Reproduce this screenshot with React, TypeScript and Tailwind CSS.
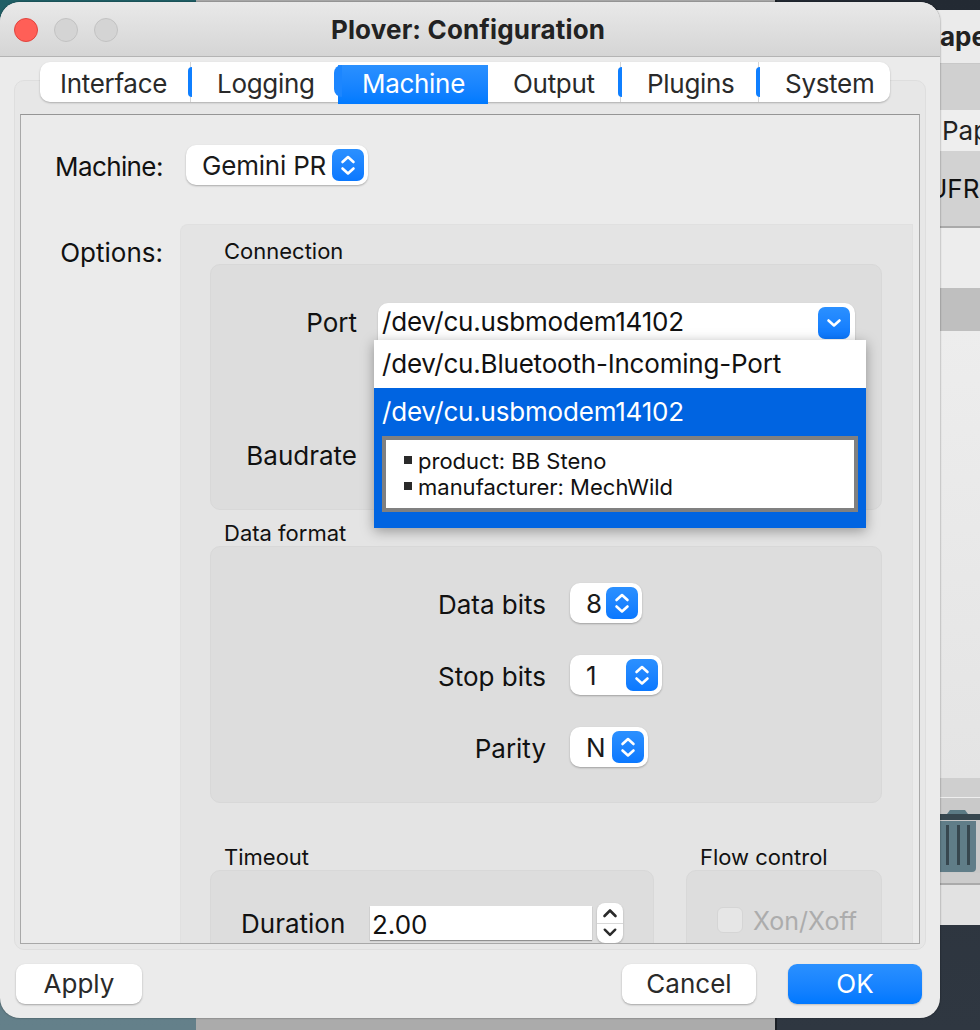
import React from "react";

const Stepper = ({ kind = "both" }: { kind?: "both" | "down" }) => (
  <span className="flex h-[32px] w-[32px] shrink-0 items-center justify-center rounded-[7px] bg-gradient-to-b from-[#2b90ff] to-[#0a78ff]">
    <svg width="32" height="32" viewBox="0 0 32 32" fill="none" stroke="#fff" strokeWidth="2.6" strokeLinecap="round" strokeLinejoin="round">
      {kind === "both" ? (
        <>
          <path d="M10.5 13 16 8l5.500 5" />
          <path d="M10.500 19.500 16 24.500l5.500-5" />
        </>
      ) : (
        <path d="M10.500 13.500 16 18.500l5.500-5" />
      )}
    </svg>
  </span>
);

const Combo = ({ text, width, pad }: { text: string; width: string; pad: string }) => (
  <div className={`flex h-[40px] items-center justify-between rounded-[10px] bg-white pr-[4px] shadow-[0_1px_2px_rgba(0,0,0,0.28)] ${width}`}>
    <span className={`text-[#1a1a1a] ${pad}`}>{text}</span>
    <Stepper />
  </div>
);

const Crescent = ({ cls }: { cls: string }) => (
  <span className={`absolute top-[5px] h-[30px] w-[4px] rounded-l-full bg-[#0f7fff] ${cls}`} />
);

const Tabs = () => (
  <div className="relative z-10 ml-[40px] mt-[5px] flex h-[40px] w-[850px] rounded-[10px] bg-white tracking-[-0.3px] text-[#2a2a2a] shadow-[0_1px_2px_rgba(0,0,0,0.25)]">
    <div className="relative flex w-[150px] items-center pl-[20px] pt-[3px]">Interface</div>
    <div className="relative flex w-[148px] items-center border-l border-[#d5d5d5] pl-[26px] pt-[3px]">
      Logging
      <Crescent cls="left-[-3px]" />
    </div>
    <div className="relative flex h-[39px] w-[150px] translate-y-[3px] items-center bg-gradient-to-b from-[#2a90ff] to-[#007aff] pl-[24px] text-white">
      <span className="-translate-y-[1px]">Machine</span>
      <span className="absolute left-[-4px] top-0 h-[32px] w-[8px] rounded-l-[8px] bg-[#1c86ff]" />
    </div>
    <div className="relative flex w-[132px] items-center pl-[25px] pt-[3px]">Output</div>
    <div className="relative flex w-[138px] items-center border-l border-[#d5d5d5] pl-[26px] pt-[3px]">
      Plugins
      <Crescent cls="left-[-3px]" />
    </div>
    <div className="relative flex w-[132px] items-center border-l border-[#d5d5d5] pl-[26px] pt-[3px]">
      System
      <Crescent cls="left-[-3px]" />
    </div>
  </div>
);

const PortDropdown = () => (
  <div className="absolute left-[163px] top-[75px] z-20 h-[188px] w-[492px] bg-[#0064e1] tracking-[-0.2px] shadow-[0_3px_12px_rgba(0,0,0,0.35)]">
    <div className="flex h-[48px] items-center bg-white pb-[2px] pl-[8px] text-[#111]">/dev/cu.Bluetooth-Incoming-Port</div>
    <div className="flex h-[48px] items-center pb-[2px] pl-[8px] text-white">/dev/cu.usbmodem14102</div>
    <div className="mx-[8px] h-[76px] border-[4px] border-[#808080] bg-white pl-[18px] pt-[8px] text-[22px] leading-[26px] tracking-normal text-[#111]">
      <div className="flex items-center gap-[6px]">
        <span className="h-[8px] w-[8px] -translate-y-[1px] bg-[#2a2a2a]" />
        product: BB Steno
      </div>
      <div className="flex items-center gap-[6px]">
        <span className="h-[8px] w-[8px] -translate-y-[1px] bg-[#2a2a2a]" />
        manufacturer: MechWild
      </div>
    </div>
  </div>
);

const Connection = () => (
  <div className="relative h-[246px] w-[672px] rounded-[10px] border border-[#d8d8d8] bg-[#dddddd] pt-[38px]">
    <div className="flex h-[37px] items-center">
      <span className="w-[146px] translate-y-[1px] text-right text-[#111]">Port</span>
      <div className="ml-[21px] flex h-[37px] w-[477px] items-start justify-between rounded-t-[10px] bg-white pl-[4px] pr-[5px] pt-[4px] shadow-[0_1px_2px_rgba(0,0,0,0.2)]">
        <span className="-mt-[4px] leading-[37px] tracking-[-0.2px] text-[#111]">/dev/cu.usbmodem14102</span>
        <Stepper kind="down" />
      </div>
    </div>
    <div className="mt-[97px] flex h-[37px] items-center">
      <span className="w-[146px] text-right text-[#111]">Baudrate</span>
    </div>
    <PortDropdown />
  </div>
);

const DataFormat = () => (
  <div className="flex h-[257px] w-[672px] flex-col gap-[32px] rounded-[10px] border border-[#d8d8d8] bg-[#dddddd] pt-[36px]">
    {[
      { label: "Data bits", value: "8", width: "w-[72px]", pad: "pl-[16px]" },
      { label: "Stop bits", value: "1", width: "w-[92px]", pad: "pl-[16px]" },
      { label: "Parity", value: "N", width: "w-[78px]", pad: "pl-[16px]" },
    ].map((r) => (
      <div key={r.label} className="flex items-center">
        <span className="w-[335px] translate-y-[1px] text-right text-[#111]">{r.label}</span>
        <div className="ml-[24px]">
          <Combo text={r.value} width={r.width} pad={r.pad} />
        </div>
      </div>
    ))}
  </div>
);

const Timeout = () => (
  <div className="w-[444px]">
    <div className="h-[26px] pl-[14px] text-[22px] leading-[26px] text-[#111]">Timeout</div>
    <div className="flex h-[120px] items-start rounded-t-[10px] border border-[#d8d8d8] bg-[#dddddd] pl-[30px] pt-[32px]">
      <span className="w-[129px] pt-[1px] leading-[40px] text-[#111]">Duration</span>
      <div className="mt-[3px] h-[34px] w-[222px] bg-white pl-[2px] leading-[37px] text-[#111] shadow-[0_1px_1px_rgba(0,0,0,0.35)]">2.00</div>
      <div className="ml-[5px] flex h-[40px] w-[26px] flex-col overflow-hidden rounded-[8px] bg-white shadow-[0_1px_2px_rgba(0,0,0,0.25)]">
        <svg width="26" height="20" viewBox="0 0 26 20" fill="none" stroke="#2a2a2a" strokeWidth="2.6" strokeLinecap="round" strokeLinejoin="round">
          <path d="M7.500 13 13 7.500 18.500 13" />
        </svg>
        <svg className="border-t border-[#d8d8d8]" width="26" height="20" viewBox="0 0 26 20" fill="none" stroke="#2a2a2a" strokeWidth="2.6" strokeLinecap="round" strokeLinejoin="round">
          <path d="M7.500 6 13 11.500 18.500 6" />
        </svg>
      </div>
    </div>
  </div>
);

const FlowControl = () => (
  <div className="w-[196px]">
    <div className="h-[26px] pl-[14px] text-[22px] leading-[26px] text-[#111]">Flow control</div>
    <div className="flex h-[120px] items-start gap-[10px] rounded-t-[10px] border border-[#d8d8d8] bg-[#dddddd] pl-[30px] pt-[36px]">
      <span className="h-[26px] w-[26px] rounded-[6px] border border-[#d5d5d5] bg-[#e6e6e6]" />
      <span className="pt-[1px] text-[25px] leading-[26px] text-[#acacac]">Xon/Xoff</span>
    </div>
  </div>
);

const Window = () => (
  <div className="absolute left-0 top-[2px] z-10 flex h-[1016px] w-[940px] flex-col overflow-hidden rounded-[20px] bg-[#ebebeb] shadow-[0_0_2px_rgba(0,0,0,0.5)]">
    <div className="relative flex h-[55px] items-center justify-center border-b border-[#b4b4b4] bg-gradient-to-b from-[#e9e9e9] to-[#d5d5d5] font-bold text-[#222]">
      <div className="absolute left-[14px] top-[16px] flex gap-[16px]">
        <span className="h-[24px] w-[24px] rounded-full border border-[#e0443e] bg-[#ff5f57]" />
        <span className="h-[24px] w-[24px] rounded-full border border-[#c2c2c2] bg-[#d4d4d4]" />
        <span className="h-[24px] w-[24px] rounded-full border border-[#c2c2c2] bg-[#d4d4d4]" />
      </div>
      <span className="pr-[4px] tracking-[0.15px]">Plover: Configuration</span>
    </div>
    <Tabs />
    <div className="mx-[14px] -mt-[22px] h-[870px] rounded-[10px] border border-[#dedede] bg-[#e7e7e7] px-[5px] pt-[33px]">
      <div className="h-[830px] overflow-hidden border border-[#a8a8a8] border-t-[#959595] bg-[#ebebeb]">
        <div className="flex h-[109px] items-start pl-[34px] pt-[30px]">
          <span className="w-[131px] pt-[1px] leading-[42px] tracking-[-0.6px] text-[#111]">Machine:</span>
          <div className="tracking-[-0.2px]">
            <Combo text="Gemini PR" width="w-[182px]" pad="pl-[16px]" />
          </div>
        </div>
        <div className="flex items-start">
          <span className="w-[142px] pt-[12px] text-right leading-[34px] text-[#111]">Options:</span>
          <div className="ml-[17px] h-[730px] w-[733px] rounded-tl-[8px] border-l border-t border-r border-[#e0e0e0] bg-[#e4e4e4] pl-[29px]">
            <div className="mt-[13px] h-[26px] pl-[14px] text-[22px] leading-[26px] text-[#111]">Connection</div>
            <Connection />
            <div className="mt-[10px] h-[26px] pl-[14px] text-[22px] leading-[26px] text-[#111]">Data format</div>
            <DataFormat />
            <div className="mt-[41px] flex gap-[32px]">
              <Timeout />
              <FlowControl />
            </div>
          </div>
        </div>
      </div>
    </div>
    <div className="mt-[14px] flex items-center justify-between pl-[16px] pr-[18px]">
      <button className="h-[40px] w-[126px] rounded-[9px] bg-white pb-[2px] text-[#2a2a2a] shadow-[0_1px_2px_rgba(0,0,0,0.3)]">Apply</button>
      <div className="flex gap-[32px]">
        <button className="h-[40px] w-[134px] rounded-[9px] bg-white pb-[2px] text-[#2a2a2a] shadow-[0_1px_2px_rgba(0,0,0,0.3)]">Cancel</button>
        <button className="h-[40px] w-[134px] rounded-[9px] bg-gradient-to-b from-[#2a90ff] to-[#0078ff] pb-[2px] text-white shadow-[0_1px_2px_rgba(0,0,0,0.2)]">OK</button>
      </div>
    </div>
  </div>
);

const BackWindow = () => (
  <div className="absolute left-[920px] top-[10px] flex h-[915px] w-[60px] flex-col overflow-hidden whitespace-nowrap bg-[#ececec] pl-[20px] text-[#222]">
    <div className="flex h-[54px] shrink-0 items-center border-b border-[#c8c8c8] bg-[#ebebeb] font-bold">ape</div>
    <div className="h-[46px] shrink-0 bg-[#d0d0d0]" />
    <div className="flex h-[41px] shrink-0 items-center bg-[#eeeeee] pl-[2px]">Pap</div>
    <div className="flex h-[77px] shrink-0 items-center border-b-[2px] border-[#aaaaaa] bg-[#d2d2d2] text-[#111]">
      <span className="-ml-[12px]">UFRF</span>
    </div>
    <div className="h-[60px] shrink-0 bg-[#ededed]" />
    <div className="h-[43px] shrink-0 bg-[#bfbfbf]" />
    <div className="h-[447px] shrink-0 bg-gradient-to-b from-[#ededed] to-[#e4e4e4]" />
    <div className="h-[20px] shrink-0 border-b border-[#eeeeee] bg-[#cfcfcf]" />
    <div className="h-[75px] shrink-0 bg-[#c9c9c9]">
      <svg width="40" height="75" viewBox="0 0 40 75">
        <path d="M7 16 10 12H25L28 16Z" fill="#5b7a84" />
        <rect x="0" y="16" width="40" height="6" fill="#37474f" />
        <path d="M0 23H36V70a4 4 0 0 1-4 4H0Z" fill="#607d88" />
        <rect x="6" y="27" width="3" height="40" fill="#37474f" />
        <rect x="17" y="27" width="3" height="40" fill="#37474f" />
        <rect x="27" y="27" width="3" height="40" fill="#37474f" />
      </svg>
    </div>
    <div className="h-[12px] shrink-0 border-b-[2px] border-[#aaaaaa] bg-[#cccccc]" />
    <div className="grow bg-[#e2e2e2]" />
  </div>
);

export default function App() {
  return (
    <div className="relative h-[1030px] w-[980px] overflow-hidden font-['Inter',sans-serif] text-[26px]">
      <div className="flex h-full">
        <div className="h-full w-[196px] bg-gradient-to-b from-[#1f5f66] via-[#5f7f86] to-[#64808a]" />
        <div className="h-full w-[579px] bg-[#ababab]" />
        <div className="h-full w-[205px] border-l-[2px] border-[#1b2026] bg-gradient-to-b from-[#232a33] to-[#2f3741]" />
      </div>
      <BackWindow />
      <Window />
    </div>
  );
}
